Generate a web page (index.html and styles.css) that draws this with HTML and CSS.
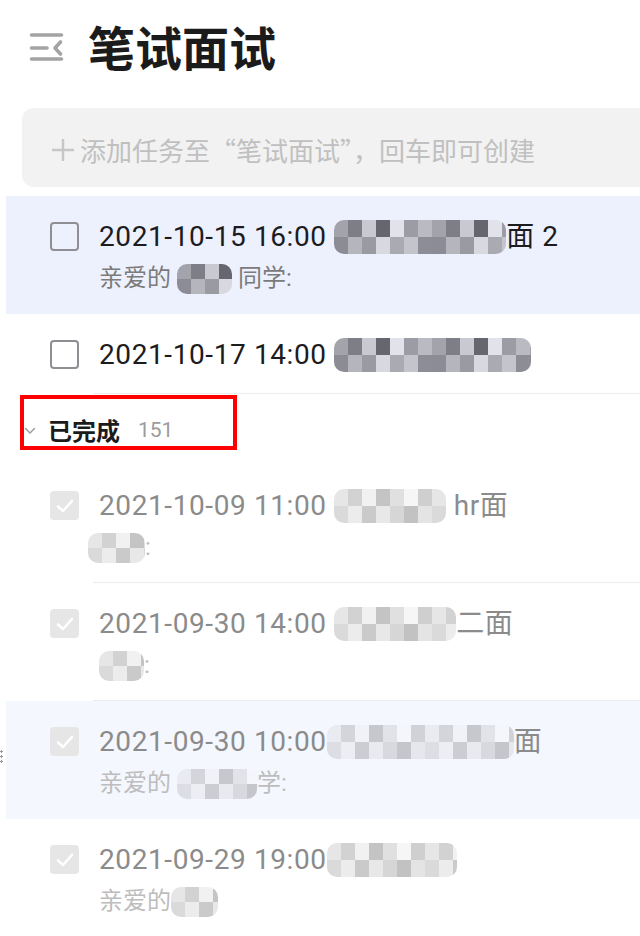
FILE: index.html
```html
<!DOCTYPE html>
<html lang="zh-CN">
<head>
<meta charset="utf-8">
<title>笔试面试</title>
<link rel="stylesheet" href="styles.css">
</head>
<body>
<div class="app">
  <header class="top">
    <svg class="menu" width="35" height="28" viewBox="0 0 35 28">
      <path d="M2.5 2H32.5M2.5 15H18M2.5 26H32.5" stroke="#a4a4a4" stroke-width="3.6" stroke-linecap="round" fill="none"/>
      <path d="M31.5 9L26 15L31.5 21" stroke="#a4a4a4" stroke-width="3.6" stroke-linecap="round" stroke-linejoin="round" fill="none"/>
    </svg>
    <h1 class="title">笔试面试</h1>
  </header>

  <div class="add">
    <svg class="plus" width="22" height="22" viewBox="0 0 22 22">
      <path d="M11 0V22M0 11H22" stroke="#c6c6c6" stroke-width="2.4" fill="none"/>
    </svg>
    <span>添加任务至“笔试面试”，回车即可创建</span>
  </div>

  <div class="list">
    <div class="row hl">
      <span class="box"></span>
      <div class="body">
        <div class="main">2021-10-15 16:00 <span class="mz dark w172"></span>面 2</div>
        <div class="sub">亲爱的 <span class="mz dark s w55"></span> 同学:</div>
      </div>
    </div>

    <div class="row div">
      <span class="box"></span>
      <div class="body">
        <div class="main">2021-10-17 14:00 <span class="mz dark w197"></span></div>
      </div>
    </div>

    <div class="sec">
      <svg class="chev" width="12" height="8" viewBox="0 0 12 8">
        <path d="M1.5 1.5L6 6L10.5 1.5" stroke="#9c9c9c" stroke-width="1.5" fill="none" stroke-linecap="round"/>
      </svg>
      <span class="sec-title">已完成</span>
      <span class="sec-count">151</span>
      <span class="mark"></span>
    </div>

    <div class="row done div">
      <span class="box"><svg width="18" height="14" viewBox="0 0 18 14"><path d="M2 7.5L7 12L16 2" stroke="#fff" stroke-width="2.6" fill="none" stroke-linecap="round" stroke-linejoin="round"/></svg></span>
      <div class="body">
        <div class="main">2021-10-09 11:00 <span class="mz light w112"></span> hr面</div>
        <div class="sub"><span class="mz light s w57 pull"></span>:</div>
      </div>
    </div>

    <div class="row done div">
      <span class="box"><svg width="18" height="14" viewBox="0 0 18 14"><path d="M2 7.5L7 12L16 2" stroke="#fff" stroke-width="2.6" fill="none" stroke-linecap="round" stroke-linejoin="round"/></svg></span>
      <div class="body">
        <div class="main">2021-09-30 14:00 <span class="mz light w122"></span>二面</div>
        <div class="sub"><span class="mz light s w45"></span>:</div>
      </div>
    </div>

    <div class="row done hl2">
      <span class="grip"></span>
      <span class="box"><svg width="18" height="14" viewBox="0 0 18 14"><path d="M2 7.5L7 12L16 2" stroke="#fff" stroke-width="2.6" fill="none" stroke-linecap="round" stroke-linejoin="round"/></svg></span>
      <div class="body">
        <div class="main">2021-09-30 10:00<span class="mz light w187"></span>面</div>
        <div class="sub">亲爱的 <span class="mz light s w80"></span>学:</div>
      </div>
    </div>

    <div class="row done">
      <span class="box"><svg width="18" height="14" viewBox="0 0 18 14"><path d="M2 7.5L7 12L16 2" stroke="#fff" stroke-width="2.6" fill="none" stroke-linecap="round" stroke-linejoin="round"/></svg></span>
      <div class="body">
        <div class="main">2021-09-29 19:00<span class="mz light w130"></span></div>
        <div class="sub">亲爱的<span class="mz light s w47"></span></div>
      </div>
    </div>
  </div>
</div>
</body>
</html>
```

FILE: styles.css
```css
html, body {
  margin: 0;
  padding: 0;
}
body {
  width: 640px;
  height: 936px;
  overflow: hidden;
  background: #ffffff;
  font-family: Roboto, "Noto Sans CJK SC", sans-serif;
}
.app {
  width: 640px;
}

.top {
  display: flex;
  align-items: center;
  height: 94px;
  padding-left: 29px;
  gap: 24px;
}
.menu {
  flex: none;
}
.title {
  margin: -4px 0 0;
  font: 700 47px/1 "Noto Sans CJK SC", sans-serif;
  color: #1b1b1b;
}

.add {
  margin: 14px 0 0 22px;
  height: 79px;
  box-sizing: border-box;
  padding: 4px 0 0 30px;
  background: #f2f2f2;
  border-radius: 12px 0 0 12px;
  display: flex;
  align-items: center;
  gap: 6px;
  color: #c0c0c0;
  font: 26px/1 "Noto Sans CJK SC", sans-serif;
  white-space: nowrap;
}
.plus {
  flex: none;
}

.list {
  margin-top: 9px;
}

.row {
  position: relative;
  margin-left: 6px;
  padding: 22px 0 21px 44px;
  display: flex;
  gap: 20px;
}
.row.hl {
  background: #edf0fd;
}
.row.hl2 {
  background: #f4f7fe;
}
.row.div {
  background: linear-gradient(#ececec, #ececec) no-repeat 87px 100% / calc(100% - 87px) 1px;
}

.box {
  flex: none;
  width: 29px;
  height: 29px;
  margin-top: 4px;
  box-sizing: border-box;
  border: 2.5px solid #8e8e94;
  border-radius: 4px;
}
.done .box {
  border: none;
  background: #e6e6e6;
  display: flex;
  align-items: center;
  justify-content: center;
}

.body {
  display: flex;
  flex-direction: column;
  min-width: 0;
}
.main {
  font-size: 28px;
  line-height: 37px;
  height: 37px;
  letter-spacing: 0.6px;
  color: #1c1c1e;
  white-space: nowrap;
}
.sub {
  margin-top: 8px;
  font-size: 24px;
  line-height: 30px;
  height: 30px;
  color: #7b7b7b;
  white-space: nowrap;
}
.done .main {
  color: #8b8b8b;
}
.done .sub {
  color: #bdbdbd;
}

.sec {
  position: relative;
  height: 71px;
  display: flex;
  align-items: center;
  padding-left: 24px;
  font-family: "Noto Sans CJK SC", sans-serif;
}
.chev {
  flex: none;
  margin-top: 2px;
}
.sec-title {
  margin-left: 12px;
  font-size: 24px;
  font-weight: 700;
  color: #1b1b1b;
}
.sec-count {
  margin-left: 18px;
  font: 21px Roboto, sans-serif;
  color: #9c9c9c;
}
.mark {
  position: absolute;
  left: 20px;
  top: 1px;
  width: 217px;
  height: 55px;
  box-sizing: border-box;
  border: 4px solid #ff0000;
}

.grip {
  position: absolute;
  left: -6px;
  top: 48px;
  width: 3px;
  height: 15px;
  background: radial-gradient(circle, #9a9a9a 1px, transparent 1.4px) 0 0 / 3px 5px;
}

/* pixelated (redacted) areas */
.mz {
  display: inline-block;
  vertical-align: middle;
  height: 34px;
  border-radius: 10px;
  margin-top: -4px;
}
.mz.s {
  height: 30px;
  margin-top: -2px;
}
.mz.dark {
  background:
    repeating-linear-gradient(90deg, #a3a3ab 0 14px, #7e7e88 14px 28px, #c9c9d1 28px 42px, #666670 42px 56px, #e2e2ea 56px 70px, #9c9ca6 70px 84px, #babac3 84px 98px) top / 100% 50% no-repeat,
    repeating-linear-gradient(90deg, #8c8c96 0 14px, #b5b5be 14px 28px, #9a9aa3 28px 42px, #d8d8e0 42px 56px, #aaaab3 56px 70px, #c4c4cc 70px 84px, #8d8d97 84px 98px) bottom / 100% 50% no-repeat;
}
.mz.light {
  background:
    repeating-linear-gradient(90deg, #e6e6e6 0 14px, #d2d2d2 14px 28px, #f1f1f1 28px 42px, #c4c4c4 42px 56px, #e0e0e0 56px 70px, #f6f6f6 70px 84px, #cfcfcf 84px 98px) top / 100% 50% no-repeat,
    repeating-linear-gradient(90deg, #dadada 0 14px, #ececec 14px 28px, #cacaca 28px 42px, #e8e8e8 42px 56px, #d6d6d6 56px 70px, #c2c2c2 70px 84px, #e4e4e4 84px 98px) bottom / 100% 50% no-repeat;
}
.hl2 .mz.light {
  background:
    repeating-linear-gradient(90deg, #e9ebf0 0 14px, #d3d5db 14px 28px, #f0f2f7 28px 42px, #c6c8ce 42px 56px, #e1e3e9 56px 70px, #f4f6fb 70px 84px, #d0d2d8 84px 98px) top / 100% 50% no-repeat,
    repeating-linear-gradient(90deg, #dcdee4 0 14px, #eceef3 14px 28px, #cbcdd3 28px 42px, #e8eaef 42px 56px, #d7d9df 56px 70px, #c4c6cc 70px 84px, #e5e7ec 84px 98px) bottom / 100% 50% no-repeat;
}
.pull {
  margin-left: -11px;
}
.w45 { width: 45px; }
.w47 { width: 47px; }
.w55 { width: 55px; }
.w57 { width: 57px; }
.w80 { width: 80px; }
.w112 { width: 112px; }
.w122 { width: 122px; }
.w130 { width: 130px; }
.w172 { width: 172px; }
.w187 { width: 187px; }
.w197 { width: 197px; }
```
